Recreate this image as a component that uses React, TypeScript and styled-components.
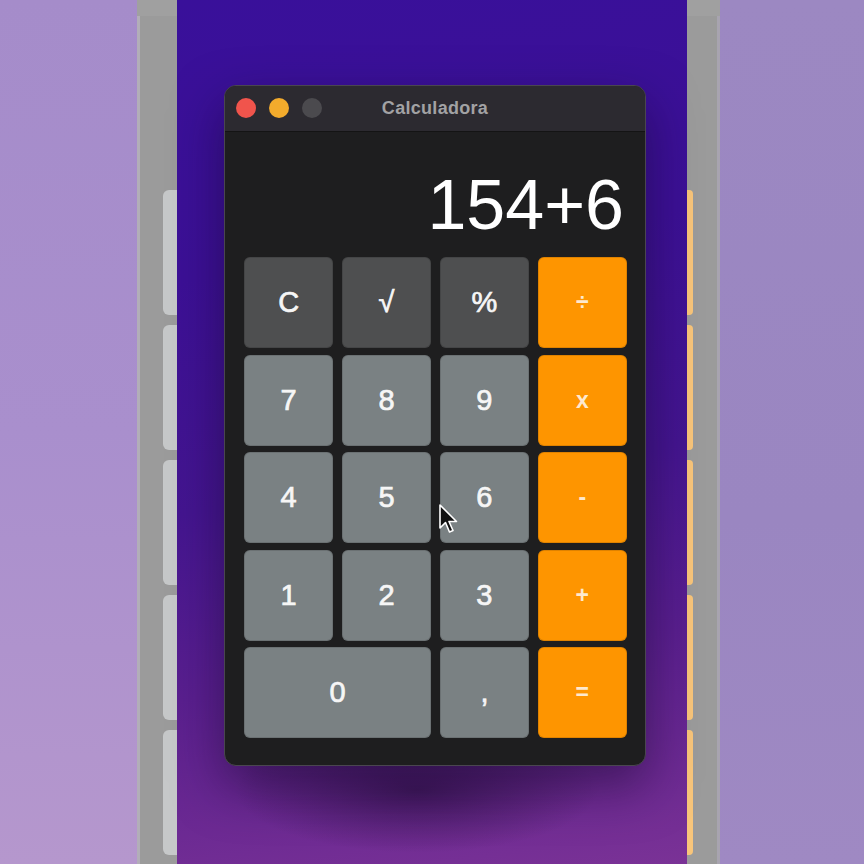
import React from 'react';
import styled, { createGlobalStyle } from 'styled-components';

const GlobalStyle = createGlobalStyle`
  html, body {
    margin: 0;
    padding: 0;
    overflow: hidden;
  }
  body {
    font-family: "Liberation Sans", Arial, sans-serif;
  }
`;

type Kind = 'func' | 'num' | 'op';

const keys: { label: string; kind: Kind; wide?: boolean }[] = [
  { label: 'C', kind: 'func' },
  { label: '√', kind: 'func' },
  { label: '%', kind: 'func' },
  { label: '÷', kind: 'op' },
  { label: '7', kind: 'num' },
  { label: '8', kind: 'num' },
  { label: '9', kind: 'num' },
  { label: 'x', kind: 'op' },
  { label: '4', kind: 'num' },
  { label: '5', kind: 'num' },
  { label: '6', kind: 'num' },
  { label: '-', kind: 'op' },
  { label: '1', kind: 'num' },
  { label: '2', kind: 'num' },
  { label: '3', kind: 'num' },
  { label: '+', kind: 'op' },
  { label: '0', kind: 'num', wide: true },
  { label: ',', kind: 'num' },
  { label: '=', kind: 'op' },
];

const ghostRows = [0, 1, 2, 3, 4];

const App = () => {
  return (
    <>
      <GlobalStyle />
      <Page>
        <OuterBg side="left" />
        <SidePanel side="left">
          <GhostColumn side="left">
            {ghostRows.map((i) => (
              <GhostKey key={i} side="left" />
            ))}
          </GhostColumn>
        </SidePanel>
        <Desktop>
          <Window>
            <TitleBar>
              <Lights>
                <Light color="#f0544c" />
                <Light color="#f3ab2c" />
                <Light color="#4b4a4e" />
              </Lights>
              <Title>Calculadora</Title>
            </TitleBar>
            <Body>
              <Display>154+6</Display>
              <Keypad>
                {keys.map((k) => (
                  <Key key={k.label} kind={k.kind} wide={k.wide}>
                    {k.label}
                  </Key>
                ))}
              </Keypad>
            </Body>
          </Window>
          <Cursor width="22" height="32" viewBox="0 0 22 32">
            <path
              d="M2 2 L2 25 L7.5 19.5 L11.5 29 L15 27.5 L11 18.5 L18.5 18.5 Z"
              fill="#111"
              stroke="#fff"
              strokeWidth="1.6"
              strokeLinejoin="round"
            />
          </Cursor>
        </Desktop>
        <SidePanel side="right">
          <GhostColumn side="right">
            {ghostRows.map((i) => (
              <GhostKey key={i} side="right" />
            ))}
          </GhostColumn>
        </SidePanel>
        <OuterBg side="right" />
      </Page>
    </>
  );
};

const Page = styled.div`
  width: 864px;
  height: 864px;
  display: flex;
  overflow: hidden;
`;

const OuterBg = styled.div<{ side: 'left' | 'right' }>`
  flex: ${(p) => (p.side === 'left' ? '0 0 137px' : '1')};
  background: ${(p) =>
    p.side === 'left'
      ? 'linear-gradient(180deg, #a58cca 0%, #a98fcd 50%, #b597cd 100%)'
      : 'linear-gradient(180deg, #9c88c2 0%, #9a86c1 60%, #9f89c3 100%)'};
`;

const SidePanel = styled.div<{ side: 'left' | 'right' }>`
  flex: 0 0 ${(p) => (p.side === 'left' ? '40px' : '33px')};
  background: #9b9b9b;
  display: flex;
  flex-direction: column;
  align-items: ${(p) => (p.side === 'left' ? 'flex-end' : 'flex-start')};
  border-top: 16px solid #a0a0a0;
  box-sizing: border-box;
  box-shadow: ${(p) =>
    p.side === 'left' ? 'inset 3px 0 0 #b2aeb8' : 'inset -3px 0 0 #a8a4b0'};
`;

const GhostColumn = styled.div<{ side: 'left' | 'right' }>`
  margin-top: 174px;
  display: flex;
  flex-direction: column;
  gap: 10px;
  width: ${(p) => (p.side === 'left' ? '14px' : '6px')};
`;

const GhostKey = styled.div<{ side: 'left' | 'right' }>`
  height: 125px;
  background: ${(p) => (p.side === 'left' ? '#c6c8c9' : '#f8c57a')};
  border-radius: ${(p) => (p.side === 'left' ? '6px 0 0 6px' : '0 4px 4px 0')};
`;

const Desktop = styled.div`
  position: relative;
  flex: 0 0 510px;
  padding: 85px 0 0 47px;
  box-sizing: border-box;
  background:
    radial-gradient(ellipse 260px 90px at 240px 790px, rgba(30, 10, 50, 0.55), transparent 70%),
    linear-gradient(172deg, #39109a 0%, #3c1096 30%, #441590 55%, #5a1f8f 75%, #7a3296 100%);
`;

const Window = styled.div`
  width: 422px;
  height: 681px;
  border-radius: 12px;
  overflow: hidden;
  background: #1e1e1f;
  border: 1px solid #4a4650;
  box-sizing: border-box;
  display: flex;
  flex-direction: column;
  box-shadow: 0 20px 50px rgba(20, 5, 40, 0.5);
`;

const TitleBar = styled.div`
  position: relative;
  height: 45px;
  flex: 0 0 45px;
  background: #2c2a30;
  border-bottom: 1px solid #141414;
  display: flex;
  align-items: center;
  justify-content: center;
`;

const Lights = styled.div`
  position: absolute;
  left: 11px;
  top: 12px;
  display: flex;
  gap: 13px;
`;

const Light = styled.div<{ color: string }>`
  width: 20px;
  height: 20px;
  border-radius: 50%;
  background: ${(p) => p.color};
`;

const Title = styled.div`
  color: #a2a2a4;
  font-size: 18px;
  font-weight: 700;
  letter-spacing: 0.3px;
`;

const Body = styled.div`
  flex: 1;
  padding: 0 18px 0 19px;
  display: flex;
  flex-direction: column;
`;

const Display = styled.div`
  height: 125px;
  color: #ffffff;
  font-size: 70px;
  line-height: 1;
  text-align: right;
  padding: 38px 3px 0 0;
  box-sizing: border-box;
`;

const Keypad = styled.div`
  display: grid;
  grid-template-columns: repeat(4, 1fr);
  grid-auto-rows: 91px;
  column-gap: 8.5px;
  row-gap: 6.5px;
`;

const keyBg: Record<Kind, string> = {
  func: '#4e4f50',
  num: '#7a8183',
  op: '#fe9500',
};

const Key = styled.div<{ kind: Kind; wide?: boolean }>`
  grid-column: ${(p) => (p.wide ? 'span 2' : 'auto')};
  background: ${(p) => keyBg[p.kind]};
  border-radius: 6px;
  display: flex;
  align-items: center;
  justify-content: center;
  color: ${(p) => (p.kind === 'op' ? '#fde9cf' : '#f6f6f6')};
  font-size: ${(p) => (p.kind === 'op' ? '23px' : '29px')};
  font-weight: ${(p) => (p.kind === 'op' ? 700 : 400)};
  -webkit-text-stroke: ${(p) => (p.kind === 'op' ? '0' : '0.7px')};
  box-shadow: inset 0 0 0 1px rgba(0, 0, 0, 0.12);
`;

const Cursor = styled.svg`
  position: absolute;
  left: 261px;
  top: 503px;
`;

export default App;
